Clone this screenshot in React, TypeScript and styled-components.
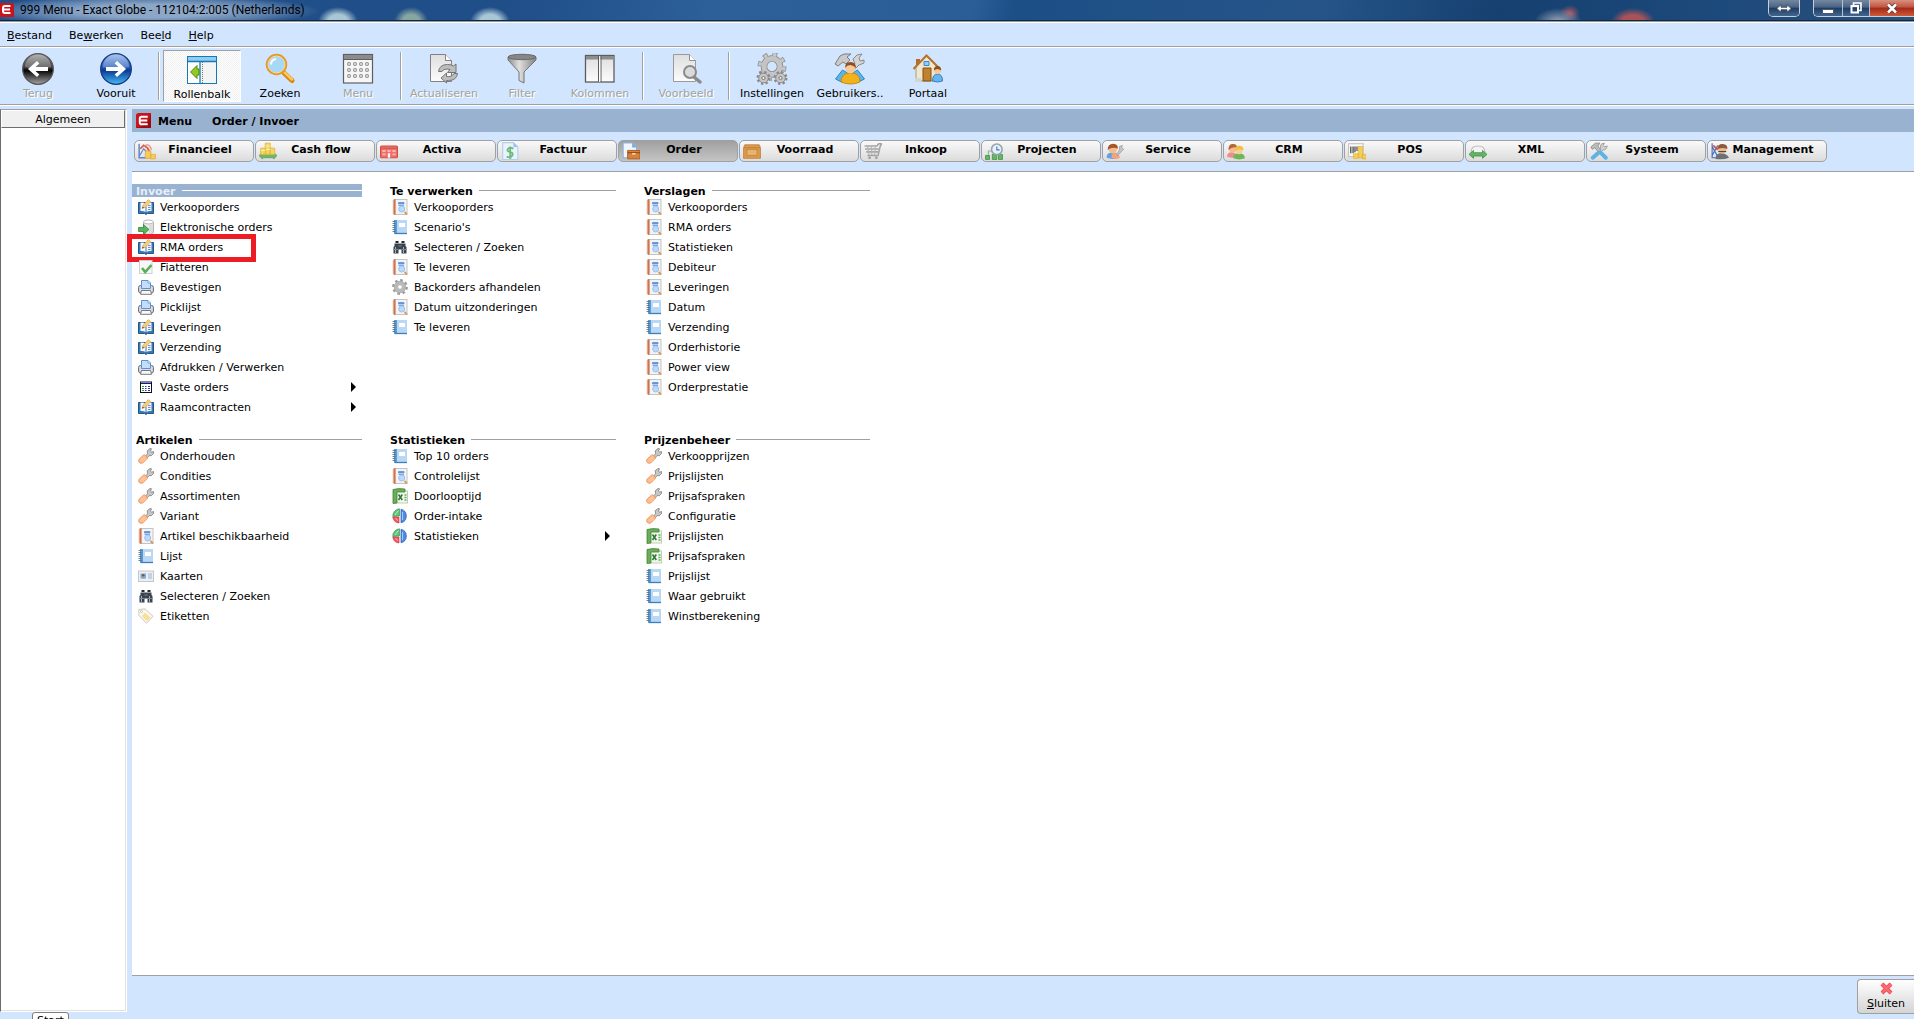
import React from "react";
import styled, { createGlobalStyle, css } from "styled-components";

const GlobalStyle = createGlobalStyle`
  * { box-sizing: border-box; }
  body { margin: 0; background: #d1e5ff; }
  button { font: inherit; color: inherit; background: none; border: 0; padding: 0; margin: 0; cursor: default; text-align: inherit; }
  svg { display: block; flex: none; }
`;

const edge = "#a0a0a0";
const accent = "#99b2d0";

const Shell = styled.div`
  display: flex;
  flex-direction: column;
  height: 100vh;
  overflow: hidden;
  background: #d1e5ff;
  color: #000;
  font: 11px/14px "DejaVu Sans", Verdana, sans-serif;
`;

/* ---------- title bar ---------- */
const TitleBar = styled.header`
  display: flex;
  align-items: flex-start;
  height: 23px;
  flex: none;
  border-bottom: 1px solid #fff;
  box-shadow: inset 0 -1px #8f9aa2, inset 0 -2px #12263d;
  background:
    radial-gradient(ellipse 170px 16px at 150px 11px, rgba(176, 196, 220, 0.75) 40%, rgba(140, 168, 202, 0.5) 75%, transparent),
    radial-gradient(ellipse 20px 15px at 338px 22px, #a9c6d4 50%, transparent),
    radial-gradient(ellipse 17px 15px at 411px 22px, #86a6a0 50%, transparent),
    radial-gradient(ellipse 20px 15px at 490px 22px, #a9c6d4 50%, transparent),
    radial-gradient(ellipse 24px 14px at 1558px 22px, #8493ab 20%, transparent),
    radial-gradient(ellipse 10px 8px at 1570px 13px, #a05563 10%, transparent),
    radial-gradient(ellipse 22px 14px at 1633px 22px, #a8525a 50%, transparent),
    linear-gradient(100deg, #234f88 0, #1f4e88 500px, #2d5f98 700px, #2b5e97 960px, #1c4f86 1000px, #265489 1300px, #15406f 1480px, #1d4a7c 1700px, #2b4f78);
`;
const TitleText = styled.h1`
  flex: 1;
  margin: 0;
  padding-left: 6px;
  font: 12px/20px Roboto, "Segoe UI", sans-serif;
`;
const Caption = styled.div`
  display: flex;
  height: 17px;
  margin-left: 13px;
  border: 1px solid #c4d0dc;
  border-top: 0;
  border-radius: 0 0 5px 5px;
  overflow: hidden;
  &:last-child { border-right: 0; border-radius: 0 0 0 5px; }
`;
const CaptionButton = styled.button<{ $w: number; $close?: boolean }>`
  display: flex;
  width: ${(p) => p.$w}px;
  justify-content: center;
  align-items: center;
  border-left: 1px solid #b4c2d0;
  background: ${(p) =>
    p.$close
      ? "linear-gradient(#d9917f, #bf5440 45%, #a32a12 50%, #d0583a)"
      : "linear-gradient(#74879e, #4a6486 45%, #1d3c64 50%, #45668c)"};
  &:first-child { border-left: 0; }
`;

/* ---------- menu bar and tool bar ---------- */
const MenuBar = styled.nav`
  display: flex;
  flex: none;
  gap: 17px;
  height: 25px;
  padding: 2px 7px 0;
  border-bottom: 1px solid #fff;
  box-shadow: inset 0 -1px ${edge};
`;
const ToolBar = styled.div`
  display: flex;
  flex: none;
  height: 58px;
  margin-left: -1px;
  padding: 2px 0 4px;
  border-bottom: 1px solid #fff;
  box-shadow: inset 0 -1px ${edge};
`;
const Separator = styled.span`
  width: 2px;
  height: 48px;
  margin: 2px 3px;
  border-left: 1px solid ${edge};
  border-right: 1px solid #fff;
`;
const ToolButton = styled.button<{ $active?: boolean }>`
  display: flex;
  flex-direction: column;
  align-items: center;
  gap: 2px;
  width: 78px;
  height: 52px;
  padding-top: 3px;
  white-space: nowrap;
  &:disabled { color: #a3a499; text-shadow: 1px 1px #fff; }
  ${(p) =>
    p.$active &&
    css`
      border: 1px solid;
      border-color: ${edge} #fff #fff ${edge};
      background: repeating-conic-gradient(#f0f0f0 0 25%, #fff 0 50%) 0 0 / 2px 2px;
    `}
`;

/* ---------- body ---------- */
const Body = styled.div`
  display: flex;
  flex: 1;
  min-height: 0;
  padding-top: 3px;
  gap: 5px;
`;
const Side = styled.aside`
  display: flex;
  flex-direction: column;
  width: 127px;
  flex: none;
`;
const SidePanel = styled.div`
  flex: 1;
  border: 1px solid;
  border-color: ${edge} #fff #fff #6d6d6d;
  box-shadow: inset -1px -1px #e3e1db;
  background: #fff;
`;
const SideHeader = styled.button`
  display: block;
  width: 124px;
  height: 18px;
  padding-top: 1px;
  border: 1px solid;
  border-color: #fff #6d6d6d #6d6d6d #fff;
  background: #f0f0f0;
  text-align: center;
`;
const SideFooter = styled.div`
  height: 7px;
  padding-left: 32px;
  overflow: hidden;
`;
const StartTab = styled.button`
  display: block;
  width: 37px;
  height: 18px;
  border: 1px solid #7d7d7d;
  border-radius: 3px;
  background: #fff;
  text-align: center;
`;
const Main = styled.main`
  display: flex;
  flex: 1;
  flex-direction: column;
  min-width: 0;
`;
const PageTitle = styled.h2`
  display: flex;
  align-items: center;
  height: 23px;
  flex: none;
  margin: 0;
  padding: 0 4px;
  gap: 7px;
  background: ${accent};
  font-size: 11px;
  line-height: 14px;
  span { padding-top: 2px; }
  span + span { margin-left: 13px; }
`;
const Tabs = styled.div`
  display: flex;
  flex: none;
  gap: 1px;
  padding: 8px 2px;
  height: 40px;
  border-bottom: 1px solid ${edge};
`;
const Tab = styled.button<{ $active?: boolean }>`
  display: flex;
  align-items: center;
  width: 120px;
  height: 22px;
  padding: 0 3px;
  border: 1px solid ${edge};
  border-radius: 5px;
  background: ${(p) => (p.$active ? "linear-gradient(#a0a0a0, #c4c4c4)" : "linear-gradient(#fafafa, #dcdcdc)")};
  font-weight: bold;
  svg { margin-right: -10px; }
  span { flex: 1; padding: 0 0 2px 4px; text-align: center; white-space: nowrap; }
`;
const Content = styled.div`
  display: grid;
  flex: 1;
  grid-template-columns: repeat(3, 230px);
  align-content: start;
  gap: 16px 24px;
  padding-top: 12px;
  border-bottom: 1px solid ${edge};
  background: #fff;
`;
const GroupTitle = styled.h3<{ $active?: boolean }>`
  display: flex;
  align-items: center;
  gap: 6px;
  height: 13px;
  margin: 0;
  padding-left: 4px;
  font-size: 11px;
  line-height: 14px;
  color: ${(p) => (p.$active ? "#e6eef8" : "#000")};
  background: ${(p) => (p.$active ? accent : "none")};
  span { padding-top: 2px; }
  &::after { content: ""; flex: 1; height: 1px; background: ${(p) => (p.$active ? "#fff" : edge)}; }
`;
const List = styled.ul`
  margin: 0;
  padding: 0;
  list-style: none;
`;
const Row = styled.li`
  position: relative;
`;
const Entry = styled.button`
  display: flex;
  align-items: center;
  gap: 6px;
  width: 100%;
  height: 20px;
  padding: 0 6px;
  white-space: nowrap;
  span { padding-top: 2px; }
`;
const Arrow = styled.i`
  margin-left: auto;
  border: solid transparent;
  border-width: 5px 0 5px 5px;
  border-left-color: #000;
`;
const Marker = styled.span`
  position: absolute;
  top: -3px;
  left: -5px;
  width: 129px;
  height: 28px;
  border: 5px solid #ed1c24;
  pointer-events: none;
`;
const Footer = styled.footer`
  display: flex;
  flex: none;
  justify-content: flex-end;
  height: 43px;
  padding-top: 3px;
`;
const CloseButton = styled.button`
  display: flex;
  flex-direction: column;
  align-items: center;
  gap: 2px;
  width: 57px;
  height: 35px;
  padding-top: 2px;
  border: 1px solid ${edge};
  border-right: 0;
  border-radius: 4px 0 0 4px;
  background: linear-gradient(#fff, #d4d4d4);
`;

/* ---------- icons ---------- */
const glyphs: Record<string, React.ReactNode> = {
  edit: (
    <>
      <path d="M.5 3.500h15v11H9.500l-1.500 1-1.500-1h-6z" fill="#3a78b4" stroke="#235688" />
      <path d="M2.500 3.500q3.500-.5 5 1v8.500q-2-1.500-5-1z" fill="#f3f8fd" />
      <path d="M8.500 4.500q1.500-1.500 5-1V12q-3-.5-5 1z" fill="#f3f8fd" />
      <path d="M10 6.500h2.500M10 8.500h2.500M10 10.500h2.500" stroke="#6c90b8" />
      <path d="M4.300 9.300l.7-3L10.300.7l2.400 2L7.200 8.300z" fill="#f8cf80" stroke="#dda04a" strokeWidth=".7" />
      <path d="M4.200 9.500l.5-1.800 1.300 1.100z" fill="#333" />
    </>
  ),
  import: (
    <>
      <path d="M5.500 3v10c0 3 10 3 10 0V3" fill="#eee" stroke="#b4b4b4" />
      <ellipse cx="10.500" cy="3" rx="5" ry="2" fill="#fff" stroke="#b4b4b4" />
      <path d="M12 6v8M14 5.500v8" stroke="#c9c9c9" />
      <path d="M.5 8.500h5v-3l5.500 5-5.500 5v-3h-5z" fill="#57b45c" stroke="#2f8b3a" strokeWidth=".8" />
    </>
  ),
  check: (
    <>
      <rect x="1.500" y="1.500" width="12.500" height="13" fill="#f7f7f7" stroke="#cfcfcf" />
      <path d="M4 9l3.200 4L13.500 6" fill="none" stroke="#58ac5a" strokeWidth="2.600" />
    </>
  ),
  printer: (
    <>
      <rect x=".6" y="6.500" width="14.800" height="7.500" rx="2" fill="#dcdce0" stroke="#66666e" />
      <path d="M3.500 9.500v-8h6.500l2.500 2.500v5.500z" fill="#c3ddfa" stroke="#5b91cf" />
      <path d="M10 1.500V4h2.500" fill="#fff" stroke="#5b91cf" strokeWidth=".8" />
      <path d="M3.500 11.500h9l1 3.800h-11z" fill="#fafafa" stroke="#77777f" />
    </>
  ),
  grid: (
    <>
      <rect x="2.500" y="3" width="11" height="10.500" fill="#fff" stroke="#111" />
      <path d="M3 4.500h10" stroke="#1414a8" />
      <path d="M4 7.500h2M4 9.500h2M4 11.500h2" stroke="#1f9b3a" strokeWidth="1.200" />
      <path d="M7 7.500h1.500M10 7.500h2M7 9.500h1.500M10 9.500h2M7 11.500h1.500M10 11.500h2" stroke="#2b38c0" />
    </>
  ),
  report: (
    <>
      <rect x="2.500" y=".5" width="12.500" height="15" fill="#f3f3f3" stroke="#c4c4c4" />
      <path d="M2.500.5v15" stroke="#c0562b" strokeWidth="2" />
      <path d="M.5 2h2.500M.5 4h2.500M.5 6h2.500M.5 8h2.500M.5 10h2.500M.5 12h2.500M.5 14h2.500" stroke="#e9a07c" strokeWidth=".8" />
      <path d="M6.500 5V3.500h5.500V5zM6.500 6.500h5.500" fill="#5e97e6" stroke="#5e8fdc" strokeWidth=".8" />
      <circle cx="9.700" cy="10" r="3" fill="#b9dafc" stroke="#9fc0ec" />
      <path d="M12.500 13l2.500 2.500" stroke="#d69a60" strokeWidth="1.800" />
    </>
  ),
  book: (
    <>
      <rect x="2" y="1" width="13" height="14" fill="#a9cdf0" />
      <path d="M5 1h10v13H5z" fill="#b9d8f5" />
      <path d="M2 1h3v14H2z" fill="#5a9bd5" />
      <path d="M3 14.500h12" stroke="#3c7fbf" strokeWidth="1.300" />
      <rect x="7" y="4" width="6" height="4" fill="#fff" />
      <path d="M.5 2.500h3M.5 4.500h3M.5 6.500h3M.5 8.500h3M.5 10.500h3M.5 12.500h3" stroke="#51647a" strokeWidth=".8" />
    </>
  ),
  binoculars: (
    <>
      <path d="M2.500 4.500h11V7l1 1v6.500H9.500v-4h-3v4h-5V8l1-1z" fill="#3b444e" />
      <path d="M3.500 3h3M9.500 3h3" stroke="#222930" strokeWidth="2" />
      <path d="M3.500 8v6M11.500 8v6" stroke="#9fb0c0" />
      <path d="M1.500 10.500h5M9.500 10.500h5M6.500 7h3" stroke="#7a8997" />
    </>
  ),
  gear: (
    <>
      <circle cx="8" cy="8" r="6.700" fill="none" stroke="#9a9a9a" strokeWidth="2.400" strokeDasharray="2.600 2.660" />
      <circle cx="8" cy="8" r="4.200" fill="none" stroke="#b9b9b9" strokeWidth="3.400" />
      <circle cx="8" cy="8" r="5.800" fill="none" stroke="#a2a2a2" strokeWidth=".6" />
      <circle cx="8" cy="8" r="2.300" fill="#fff" stroke="#999" strokeWidth=".7" />
    </>
  ),
  wrench: (
    <>
      <path d="M7 8.500l2.600-2.700-.4-3L12 .5l1.500.3-1 2.200 1 1.300 2-.8.2 1.800-2.400 2.400-2.300-.1L9 10.200z" fill="#c9c9c9" stroke="#858585" strokeWidth=".9" />
      <path d="M1.200 11l5-4.500 3.600 3.400-4.700 4.800q-2 1.400-3.800-.2-1.500-1.700-.1-3.500z" fill="#fdba8c" stroke="#ee9660" strokeWidth=".9" />
      <path d="M3 12.500l3.700-3.700M4.700 13.500l3-3" stroke="#ffd9bd" strokeWidth=".8" />
    </>
  ),
  card: (
    <>
      <rect x=".5" y="3" width="15" height="10.500" fill="#eceef2" stroke="#c3c7cd" />
      <rect x="2.500" y="5.500" width="5.500" height="5" fill="#6fb0ee" />
      <circle cx="5.200" cy="7.300" r="1.300" fill="#8a5530" />
      <path d="M3.500 10.500q1.700-2.500 3.500 0z" fill="#e08a3a" />
      <path d="M10 6h4M10 8h4M10 10h4" stroke="#9eb4cf" />
    </>
  ),
  tag: (
    <>
      <path d="M.8 1.500L7 .8l8 7.500-6.500 7L1 7.500z" fill="#faf8f2" stroke="#cdc8ba" />
      <path d="M7 4.700l5.500 4.700-3.500 3.700L3.700 8z" fill="#f8df94" />
      <circle cx="3.500" cy="3.500" r="1" fill="#fff" stroke="#b9b3a4" strokeWidth=".7" />
    </>
  ),
  excel: (
    <>
      <rect x="4" y="3" width="11.500" height="12" fill="#f2f7ee" stroke="#bcd3b0" />
      <path d="M1 1.500Q7 0 13 1v3H5v11l-4 .5z" fill="#6bae58" stroke="#3d8434" strokeWidth=".8" />
      <path d="M6.500 6.500l3.800 5.500M10.300 6.500L6.500 12" stroke="#2f7a36" strokeWidth="1.600" />
      <path d="M12.500 7h2M12.500 9.500h2M12.500 12h2" stroke="#6aa860" strokeWidth="1.300" />
    </>
  ),
  pie: (
    <>
      <path d="M7.500 8V.8A7.200 7.200 0 0 0 .8 8.500z" fill="#62c27b" stroke="#3a9c58" strokeWidth=".7" />
      <path d="M7 9H.8a7 7 0 0 0 6.200 6z" fill="#ef5a5f" stroke="#cf3e46" strokeWidth=".7" />
      <path d="M9 1.200a7 7 0 0 1 0 13.600z" fill="#4f8ce0" stroke="#2b5fb5" strokeWidth=".7" />
      <path d="M3 7l3.500-4.500M3.500 10.500l2.500 2" stroke="#fff" strokeOpacity=".6" />
      <path d="M10.500 4v8" stroke="#a7cbf7" />
    </>
  ),
  /* module tabs */
  financial: (
    <>
      <path d="M1 1.500v12.500h8" fill="none" stroke="#5b86cc" strokeWidth="1.300" />
      <path d="M1.500 12L5 6l4 4" fill="none" stroke="#5b86cc" />
      <path d="M2 6l3-3 3.500 2.500 2.500 4" fill="none" stroke="#e05242" strokeWidth="1.500" />
      <path d="M5 4q5-4 7 3" fill="none" stroke="#e4897d" />
      <path d="M6.500 8h5v6.500h-5zM11 11h4.500v4H11z" fill="#f7cb58" stroke="#dfae42" strokeWidth=".7" />
    </>
  ),
  cash: (
    <>
      <path d="M0 12l3-2.500v1.500h10V9.500l3 2.500-3 3.200V14H3v1.200z" fill="#6cb86e" stroke="#4e9c55" strokeWidth=".6" />
      <path d="M1.500 5.500H6V11H1.500zM5.500 1H10v10H5.500zM9.500 5.500H14V11H9.500z" fill="#f6d75e" stroke="#dcb443" strokeWidth=".7" />
      <path d="M6 3.500h4M6 6.500h4M2 7.500h3.500" stroke="#fff0a8" />
    </>
  ),
  assets: (
    <>
      <rect x=".5" y="3.500" width="15" height="10.500" rx="1" fill="#ee7068" stroke="#cf4f48" />
      <path d="M1 5.500h14" stroke="#d5544c" />
      <path d="M2 8h3M6.500 8h3M11 8h3M2 11h3M11 11h3" stroke="#f9b4ae" strokeWidth="1.600" />
      <path d="M7 10h2v4H7z" fill="#fff" />
    </>
  ),
  invoice: (
    <>
      <path d="M1.500.5H11l4 4v11H1.500z" fill="#e9f3fd" stroke="#b3cfea" />
      <path d="M11 .5v4h4z" fill="#9cc4ea" />
      <path d="M11 6Q8 4 6.300 6T8 8.800t2 3.200-5 1M8.200 4v11" fill="none" stroke="#6dba78" strokeWidth="1.600" />
    </>
  ),
  order: (
    <>
      <path d="M1 .8h8l4 4V14H1z" fill="#eef6ff" stroke="#8fb4dc" />
      <path d="M9 .8v4h4z" fill="#7aaee0" />
      <path d="M5 7.500h11V15H5z" fill="#d9813a" stroke="#a9591f" strokeWidth=".8" />
      <path d="M5 9.500h11" stroke="#8f4a18" />
      <path d="M9 10.500h3" stroke="#ffe2b4" strokeWidth="1.300" />
    </>
  ),
  stock: (
    <>
      <path d="M1.500 2.500h13l1 2.500v9.500H.5V5z" fill="#dc9a4e" stroke="#c28440" strokeWidth=".8" />
      <path d="M1 5h14" stroke="#c28440" />
      <rect x="3.500" y="6.500" width="9" height="5.500" fill="#e9b36d" stroke="#c5853b" strokeWidth=".8" />
    </>
  ),
  cart: (
    <>
      <path d="M.5 3.500h11l1.500-2h3l-1.500 2-2 8.500H3M1 6.200h12M2 8.800h10.500" fill="none" stroke="#a4a4a4" strokeWidth="1.400" />
      <path d="M3 3.500l1.500 8M6.500 3.500l.5 8M10 3.500l-.5 8" stroke="#b5b5b5" />
      <circle cx="5" cy="14" r="1.200" fill="#9b9b9b" />
      <circle cx="11" cy="14" r="1.200" fill="#9b9b9b" />
    </>
  ),
  projects: (
    <>
      <path d="M3 12V8h5" fill="none" stroke="#8fb58f" />
      <path d="M.5 12h3.500v3.500H.500zM6.500 11h4v4.500h-4zM12 11h3.500v4.500H12z" fill="#63b862" stroke="#3f8f45" strokeWidth=".7" />
      <circle cx="10.500" cy="6.500" r="4.700" fill="#e8f1fa" stroke="#95a3b5" strokeWidth="1.400" />
      <path d="M10.500 4v3h2.500" fill="none" stroke="#4f79ad" />
    </>
  ),
  service: (
    <>
      <path d="M.5 14q0-4.500 4-4.500h3q4 0 4 4.500-5 2-11 0z" fill="#5fa3e4" />
      <path d="M5 12q2-4 6-1.500l1.500 3.500q-4 2-7.500 0z" fill="#f4a478" />
      <circle cx="6" cy="6.500" r="3.700" fill="#f4bd8e" />
      <path d="M1.500 7Q1.500 1.500 6.500 1.500q4.500.5 4 4.500-5-2-9 1z" fill="#a4552a" />
      <path d="M9.500 11L12 7V4l2.500-1-.5 2 1.800 1.500L14 8l-3.500 4z" fill="#c2c5ca" stroke="#92969c" strokeWidth=".6" />
    </>
  ),
  people: (
    <>
      <path d="M0 13q0-4 4-4t5 4q-4 2-9 0z" fill="#ef8c8c" />
      <circle cx="5" cy="6" r="3.400" fill="#f4bd8e" />
      <path d="M1.300 7q0-5.500 4-5.300t3.500 3.300q-4-1-7.500 2z" fill="#b5633a" />
      <path d="M5.500 14.500q0-4.500 5-4.500t5.500 4.500q-5 2-10.500 0z" fill="#6cb757" />
      <circle cx="10.700" cy="7.500" r="3.300" fill="#f7cf9f" />
      <path d="M7 8q0-5 4-4.700t3.500 4q-4-1.500-7.500.7z" fill="#efc13c" />
    </>
  ),
  pos: (
    <>
      <rect x=".5" y="1.500" width="13" height="11.500" fill="#fafafa" stroke="#c4c4c4" />
      <path d="M2.500 4v6M4.500 4v6M6.200 4v5M8 4v4" stroke="#333" />
      <path d="M9 4h4v10H9zM5 10.500h4.500v4H5zM12.500 11H16v4h-3.500z" fill="#f6cf56" stroke="#e0b440" strokeWidth=".7" />
    </>
  ),
  xml: (
    <>
      <path d="M2 8.500q0-5 6-5t6 5v3H2z" fill="#f3f3f3" stroke="#bdbdbd" />
      <path d="M0 11l4-3.500v2h8v-2l4 3.500-4 3.500v-2H4v2z" fill="#63b463" stroke="#429046" strokeWidth=".7" />
    </>
  ),
  system: (
    <>
      <path d="M15.300 3.500l-2.500.8-1-1.300 1-2q-3 0-3.500 2.500l.2 2L5 10l2 2 4.500-5q3 .5 3.800-3.500z" fill="#d0d0d0" stroke="#9b9b9b" strokeWidth=".8" />
      <path d="M.8 4.500l4-3.500h4L7 3.500 9.500 7 7.500 9 4.300 5 2 6.500z" fill="#bcbcbc" stroke="#8e8e8e" strokeWidth=".8" />
      <path d="M9.500 9.500l4.500 4.500M6.500 10.500L2.500 14" stroke="#5cb3e8" strokeWidth="3.500" strokeLinecap="round" />
    </>
  ),
  management: (
    <>
      <path d="M1 1v13h4M1 4l5 9M6 3l-5 9" fill="none" stroke="#3c6fc4" />
      <path d="M2 3l4 4" stroke="#e05242" strokeWidth="1.500" />
      <path d="M4 15q0-5 5-5t7 4q-5 2-12 1z" fill="#6c7178" />
      <circle cx="10" cy="6.500" r="3.800" fill="#f0b788" />
      <path d="M5.500 6.500Q6 1.500 10.500 1.800t4 4.500q-4-2-9 .2z" fill="#8b5a3a" />
      <path d="M6.500 8.500h7" stroke="#4a4a4a" />
    </>
  ),
};

/* 32-pixel toolbar drawings */
const toolGlyphs: Record<string, React.ReactNode> = {
  back: (
    <>
      <circle cx="16" cy="16" r="15.300" fill="url(#gBlack)" stroke="#555" strokeWidth="1.300" />
      <path d="M3 14a13 12.500 0 0 1 26 0q-13 4-26 0z" fill="#fff" fillOpacity=".25" />
      <path d="M6 16l9-8 2.300 2.500-3.800 3.500H26v4H13.500l3.800 3.500L15 24z" fill="#fff" />
    </>
  ),
  forward: (
    <>
      <circle cx="16" cy="16" r="15.300" fill="url(#gBlue)" stroke="#173a80" strokeWidth="1.300" />
      <path d="M3 14a13 12.500 0 0 1 26 0q-13 4-26 0z" fill="#fff" fillOpacity=".25" />
      <path d="M26 16l-9-8-2.300 2.500 3.800 3.500H6v4h12.500l-3.800 3.500L17 24z" fill="#fff" />
    </>
  ),
  scroll: (
    <>
      <rect x="1.500" y="2.500" width="29" height="27" fill="#f4f4f4" stroke="#1878b4" />
      <path d="M2 3h28v4H2z" fill="#8fcdf4" />
      <path d="M2 7h12v22H2z" fill="#fff" />
      <path d="M14 7v22M1 7.500h30" stroke="#1878b4" strokeWidth="1.300" />
      <path d="M16.500 8v21" stroke="#777" strokeDasharray="1 1" />
      <path d="M4.500 18l6.500-6.500V15h2v6h-2v3.500z" fill="#8fcb22" stroke="#4f8a10" />
    </>
  ),
  search: (
    <>
      <path d="M20 20l8 7.500" stroke="#d98511" strokeWidth="5" strokeLinecap="round" />
      <path d="M20.500 19.500l7.500 7" stroke="#ffc95c" strokeWidth="2.500" strokeLinecap="round" />
      <circle cx="12.500" cy="11.500" r="9.500" fill="#a8d8f8" stroke="#e09a2c" strokeWidth="2.500" />
      <circle cx="12.500" cy="11.500" r="8.500" fill="none" stroke="#fbe0a8" />
      <path d="M7 11.500q0-5 5-5.500" fill="none" stroke="#fff" strokeWidth="2" />
    </>
  ),
  menu: (
    <>
      <rect x="1.500" y="1.500" width="29" height="28.500" fill="#f6f6f6" stroke="#5f5f5f" strokeWidth="1.200" />
      <path d="M2 2h28v4H2z" fill="#8b8b8b" />
      <path d="M1.500 6.500h29" stroke="#5f5f5f" />
      {[10.5, 16.5, 22.5].map((y) => [7, 13, 19, 25].map((x) => <rect key={`${x}-${y}`} x={x - 1.5} y={y - 1} width="3" height="3" rx="1" fill="#d0d0d0" stroke="#8a8a8a" />))}
    </>
  ),
  refresh: (
    <>
      <path d="M2.500 1.500h15l6 6v21h-21z" fill="url(#gPage)" stroke="#828282" />
      <path d="M17.500 1.500v6h6" fill="#fff" stroke="#828282" />
      <path d="M10.500 18.500q1-7 9-7 4 0 6 1.500l2.500-2v8.500H19.500l2.500-3q-6-1.500-8 2z" fill="#bdbdbd" stroke="#757575" />
      <path d="M29.500 20.500q-1 7-9 7h-2V30L13 25l5.500-5v3.500q5 1 7.500-3z" fill="#bdbdbd" stroke="#757575" />
    </>
  ),
  filter: (
    <>
      <path d="M2 4v3l11 12v8.500l5 2.500V19L30 7V4z" fill="url(#gMetal)" stroke="#777" />
      <ellipse cx="16" cy="4" rx="14" ry="2.700" fill="#868686" stroke="#6a6a6a" />
    </>
  ),
  columns: (
    <>
      <rect x="1.500" y="2.500" width="28.500" height="26.500" fill="url(#gPage)" stroke="#5c5c5c" strokeWidth="1.300" />
      <path d="M2 3h28v3.500H2z" fill="#8d8d8d" />
      <path d="M14.500 3v26M17 3v26" stroke="#5c5c5c" />
      <path d="M15.700 3v26" stroke="#fff" />
    </>
  ),
  preview: (
    <>
      <path d="M3.500 1.500h16l6 6v21h-22z" fill="url(#gPage)" stroke="#9a9a9a" />
      <path d="M19.500 1.500v6h6" fill="#fff" stroke="#8f8f8f" />
      <path d="M24 24l6 5" stroke="#8b8b8b" strokeWidth="3.500" strokeLinecap="round" />
      <circle cx="20" cy="19" r="6" fill="#dadada" stroke="#8a8a8a" strokeWidth="2" />
    </>
  ),
  settings: (
    <>
      <circle cx="16" cy="13.500" r="12" fill="none" stroke="#8d8d8d" strokeWidth="5" strokeDasharray="4.710 4.715" />
      <circle cx="16" cy="13.500" r="8" fill="none" stroke="#8d8d8d" strokeWidth="6.500" />
      <circle cx="16" cy="13.500" r="12" fill="none" stroke="#c6c6c6" strokeWidth="3.500" strokeDasharray="3.300 6.125" strokeDashoffset="-.7" />
      <circle cx="16" cy="13.500" r="8" fill="none" stroke="#c4c4c4" strokeWidth="5" />
      {[7.5, 24.5].map((x) => (
        <g key={x}>
          <circle cx={x} cy="25" r="5.800" fill="none" stroke="#888" strokeWidth="2.400" strokeDasharray="2.280 2.275" />
          <circle cx={x} cy="25" r="4.800" fill="#c6c6c6" stroke="#8c8c8c" />
          <circle cx={x} cy="25" r="1.600" fill="#eee" stroke="#777" />
        </g>
      ))}
    </>
  ),
  users: (
    <>
      <path d="M1 11l5-8 4-2h7l-4 3 3 3-4 4-3-2-5 4z" fill="#c9c9c9" stroke="#7d7d7d" />
      <path d="M28 1l-5 1-4 4 2 5-3 3 3 2 4-4 5-2V7l-4 1-1-3z" fill="#d4d4d4" stroke="#8a8a8a" />
      <path d="M1.500 26l7-9 5 3-6 9zM30.500 26l-7-9-5 3 6 9z" fill="#59b4ee" stroke="#2f87c2" />
      <path d="M7 29q0-9 9.500-9t9.500 9q-9 4-19 0z" fill="#f2b21d" stroke="#c98a12" />
      <circle cx="16.500" cy="15.500" r="5" fill="#f7c898" />
      <path d="M11 15q0-6 5.500-6t5.500 6q-3-3-6-3t-5 3z" fill="#8c4f22" />
    </>
  ),
  portal: (
    <>
      <path d="M4 6h4v6H4z" fill="#b56a2a" />
      <path d="M4 14L14.500 3 25 14v14H4z" fill="#efe8cf" stroke="#a89b78" />
      <path d="M1.500 16L14.500 2.500 28 16" fill="none" stroke="#b8722e" strokeWidth="2" />
      <path d="M11 15h8v13h-8z" fill="#c2812f" stroke="#80501a" />
      <path d="M12 8.500h5v4h-5z" fill="#8fd0fb" stroke="#3b87c7" />
      <path d="M3 25h6v4H3z" fill="#cfd4d4" />
      <path d="M20.500 28q0-7 5-7t5 7q-5 2-10 0z" fill="#67b5ef" stroke="#3b7fbd" />
      <circle cx="25.500" cy="17.500" r="3.500" fill="#f7c898" />
      <path d="M21.800 17.500q0-4.500 3.700-4.500t3.700 4.500q-4-3-7.400 0z" fill="#8c4f22" />
    </>
  ),
};

const HiddenSvg = styled.svg`
  position: absolute;
`;
const Defs = () => (
  <HiddenSvg width="0" height="0" aria-hidden>
    <defs>
      <linearGradient id="gBlack" x2="0" y2="1"><stop stopColor="#9a9a9a" /><stop offset=".45" stopColor="#3c3c3c" /><stop offset=".55" stopColor="#050505" /><stop offset="1" stopColor="#a5a5a5" /></linearGradient>
      <linearGradient id="gBlue" x2="0" y2="1"><stop stopColor="#8fb4ea" /><stop offset=".45" stopColor="#2057b5" /><stop offset=".55" stopColor="#0a3a92" /><stop offset="1" stopColor="#46bdf8" /></linearGradient>
      <linearGradient id="gPage" x2="0" y2="1"><stop stopColor="#dedede" /><stop offset="1" stopColor="#fcfcfc" /></linearGradient>
      <linearGradient id="gMetal"><stop stopColor="#8d8d8d" /><stop offset=".4" stopColor="#e0e0e0" /><stop offset="1" stopColor="#828282" /></linearGradient>
    </defs>
  </HiddenSvg>
);

const Icon = ({ name, size = 16 }: { name: string; size?: number }) => (
  <svg width={size} height={size} viewBox="0 0 16 16" aria-hidden>{glyphs[name]}</svg>
);
const ToolIcon = ({ name }: { name: string }) => (
  <svg width="32" height="32" viewBox="0 0 32 32" aria-hidden>{toolGlyphs[name]}</svg>
);
const Logo = ({ size }: { size: number }) => (
  <svg width={size} height={size} viewBox="0 0 16 16" aria-hidden>
    <path d="M0 3Q0 0 3 0h13v16H0z" fill="#c8141c" />
    <path d="M16 0v16H0q14-2 16-16z" fill="#9c0a12" />
    <path d="M12.500 4H6Q4 4 4 6v4q0 2 2 2h6.500M4.500 8h7.500" fill="none" stroke="#fff" strokeWidth="2" />
  </svg>
);

/* ---------- data ---------- */
const menus: [string, string, string][] = [["", "B", "estand"], ["Be", "w", "erken"], ["Bee", "l", "d"], ["", "H", "elp"]];

type Tool = { icon: string; label: string; off?: boolean; active?: boolean };
const tools: Tool[][] = [
  [{ icon: "back", label: "Terug", off: true }, { icon: "forward", label: "Vooruit" }],
  [{ icon: "scroll", label: "Rollenbalk", active: true }, { icon: "search", label: "Zoeken" }, { icon: "menu", label: "Menu", off: true }],
  [{ icon: "refresh", label: "Actualiseren", off: true }, { icon: "filter", label: "Filter", off: true }, { icon: "columns", label: "Kolommen", off: true }],
  [{ icon: "preview", label: "Voorbeeld", off: true }],
  [{ icon: "settings", label: "Instellingen" }, { icon: "users", label: "Gebruikers.." }, { icon: "portal", label: "Portaal" }],
];

const tabs: [string, string][] = [
  ["financial", "Financieel"], ["cash", "Cash flow"], ["assets", "Activa"], ["invoice", "Factuur"], ["order", "Order"],
  ["stock", "Voorraad"], ["cart", "Inkoop"], ["projects", "Projecten"], ["service", "Service"], ["people", "CRM"],
  ["pos", "POS"], ["xml", "XML"], ["system", "Systeem"], ["management", "Management"],
];

type Item = { icon: string; label: string; sub?: boolean; marked?: boolean };
const it = (icon: string, label: string, more: Partial<Item> = {}): Item => ({ icon, label, ...more });
const groups: { title: string; active?: boolean; items: Item[] }[] = [
  {
    title: "Invoer", active: true,
    items: [
      it("edit", "Verkooporders"), it("import", "Elektronische orders"), it("edit", "RMA orders", { marked: true }),
      it("check", "Fiatteren"), it("printer", "Bevestigen"), it("printer", "Picklijst"), it("edit", "Leveringen"),
      it("edit", "Verzending"), it("printer", "Afdrukken / Verwerken"), it("grid", "Vaste orders", { sub: true }),
      it("edit", "Raamcontracten", { sub: true }),
    ],
  },
  {
    title: "Te verwerken",
    items: [
      it("report", "Verkooporders"), it("book", "Scenario's"), it("binoculars", "Selecteren / Zoeken"), it("report", "Te leveren"),
      it("gear", "Backorders afhandelen"), it("report", "Datum uitzonderingen"), it("book", "Te leveren"),
    ],
  },
  {
    title: "Verslagen",
    items: [
      it("report", "Verkooporders"), it("report", "RMA orders"), it("report", "Statistieken"), it("report", "Debiteur"),
      it("report", "Leveringen"), it("book", "Datum"), it("book", "Verzending"), it("report", "Orderhistorie"),
      it("report", "Power view"), it("report", "Orderprestatie"),
    ],
  },
  {
    title: "Artikelen",
    items: [
      it("wrench", "Onderhouden"), it("wrench", "Condities"), it("wrench", "Assortimenten"), it("wrench", "Variant"),
      it("report", "Artikel beschikbaarheid"), it("book", "Lijst"), it("card", "Kaarten"), it("binoculars", "Selecteren / Zoeken"),
      it("tag", "Etiketten"),
    ],
  },
  {
    title: "Statistieken",
    items: [
      it("book", "Top 10 orders"), it("report", "Controlelijst"), it("excel", "Doorlooptijd"), it("pie", "Order-intake"),
      it("pie", "Statistieken", { sub: true }),
    ],
  },
  {
    title: "Prijzenbeheer",
    items: [
      it("wrench", "Verkoopprijzen"), it("wrench", "Prijslijsten"), it("wrench", "Prijsafspraken"), it("wrench", "Configuratie"),
      it("excel", "Prijslijsten"), it("excel", "Prijsafspraken"), it("book", "Prijslijst"), it("book", "Waar gebruikt"),
      it("book", "Winstberekening"),
    ],
  },
];

export default function App() {
  return (
    <Shell>
      <GlobalStyle />
      <Defs />
      <TitleBar>
        <svg width="14" height="17" viewBox="0 0 14 17" aria-hidden>
          <path d="M0 3h11q3 0 3 3v11H0z" fill="#c8141c" />
          <path d="M10.500 6H5Q3 6 3 8v3q0 2 2 2h5.500M3.500 9.500H10" fill="none" stroke="#fff" strokeWidth="2" />
        </svg>
        <TitleText>999 Menu - Exact Globe - 112104:2:005 (Netherlands)</TitleText>
        <Caption>
          <CaptionButton $w={30} aria-label="Verplaatsen">
            <svg width="16" height="9" viewBox="0 0 16 9"><path d="M.8 4.500L5 .8v2.500h6V.8l4.200 3.700L11 8.200V5.700H5v2.500z" fill="#fff" stroke="#3c4858" strokeWidth=".8" /></svg>
          </CaptionButton>
        </Caption>
        <Caption>
          <CaptionButton $w={28} aria-label="Minimaliseren">
            <svg width="12" height="12" viewBox="0 0 12 12"><path d="M.5 7.500h11v4H.5z" fill="#fff" stroke="#4b5768" /></svg>
          </CaptionButton>
          <CaptionButton $w={27} aria-label="Verkleinen">
            <svg width="12" height="12" viewBox="0 0 12 12"><path d="M3.500 3V1h7.500v7.500H9" fill="none" stroke="#fff" strokeWidth="1.600" /><path d="M1.500 4h6.500v6.500H1.500z" fill="none" stroke="#fff" strokeWidth="2" /></svg>
          </CaptionButton>
          <CaptionButton $w={45} $close aria-label="Venster sluiten">
            <svg width="12" height="11" viewBox="0 0 12 11"><path d="M2 1.500l8 8M10 1.500l-8 8" stroke="#5c3a3a" strokeWidth="4" /><path d="M2 1.500l8 8M10 1.500l-8 8" stroke="#fff" strokeWidth="2.500" /></svg>
          </CaptionButton>
        </Caption>
      </TitleBar>

      <MenuBar>
        {menus.map(([a, k, b]) => (
          <button key={a + k + b}>{a}<u>{k}</u>{b}</button>
        ))}
      </MenuBar>

      <ToolBar>
        {tools.map((set, i) => (
          <React.Fragment key={i}>
            {i > 0 && <Separator />}
            {set.map((t) => (
              <ToolButton key={t.label} disabled={t.off} $active={t.active}>
                <ToolIcon name={t.icon} />
                <span>{t.label}</span>
              </ToolButton>
            ))}
          </React.Fragment>
        ))}
      </ToolBar>

      <Body>
        <Side>
          <SidePanel><SideHeader>Algemeen</SideHeader></SidePanel>
          <SideFooter><StartTab>Start</StartTab></SideFooter>
        </Side>
        <Main>
          <PageTitle><Logo size={15} /><span>Menu</span><span>Order / Invoer</span></PageTitle>
          <Tabs>
            {tabs.map(([icon, label]) => (
              <Tab key={label} $active={label === "Order"}>
                <Icon name={icon} size={18} />
                <span>{label}</span>
              </Tab>
            ))}
          </Tabs>
          <Content>
            {groups.map((g) => (
              <section key={g.title}>
                <GroupTitle $active={g.active}><span>{g.title}</span></GroupTitle>
                <List>
                  {g.items.map((item, i) => (
                    <Row key={i}>
                      <Entry>
                        <Icon name={item.icon} />
                        <span>{item.label}</span>
                        {item.sub && <Arrow />}
                      </Entry>
                      {item.marked && <Marker />}
                    </Row>
                  ))}
                </List>
              </section>
            ))}
          </Content>
          <Footer>
            <CloseButton>
              <svg width="13" height="13" viewBox="0 0 13 13" aria-hidden>
                <path d="M2 2l9 9M11 2l-9 9" stroke="#e0484e" strokeWidth="4" />
                <path d="M2 2l9 9M11 2l-9 9" stroke="#ff6a6e" strokeWidth="2.500" />
              </svg>
              <span><u>S</u>luiten</span>
            </CloseButton>
          </Footer>
        </Main>
      </Body>
    </Shell>
  );
}
